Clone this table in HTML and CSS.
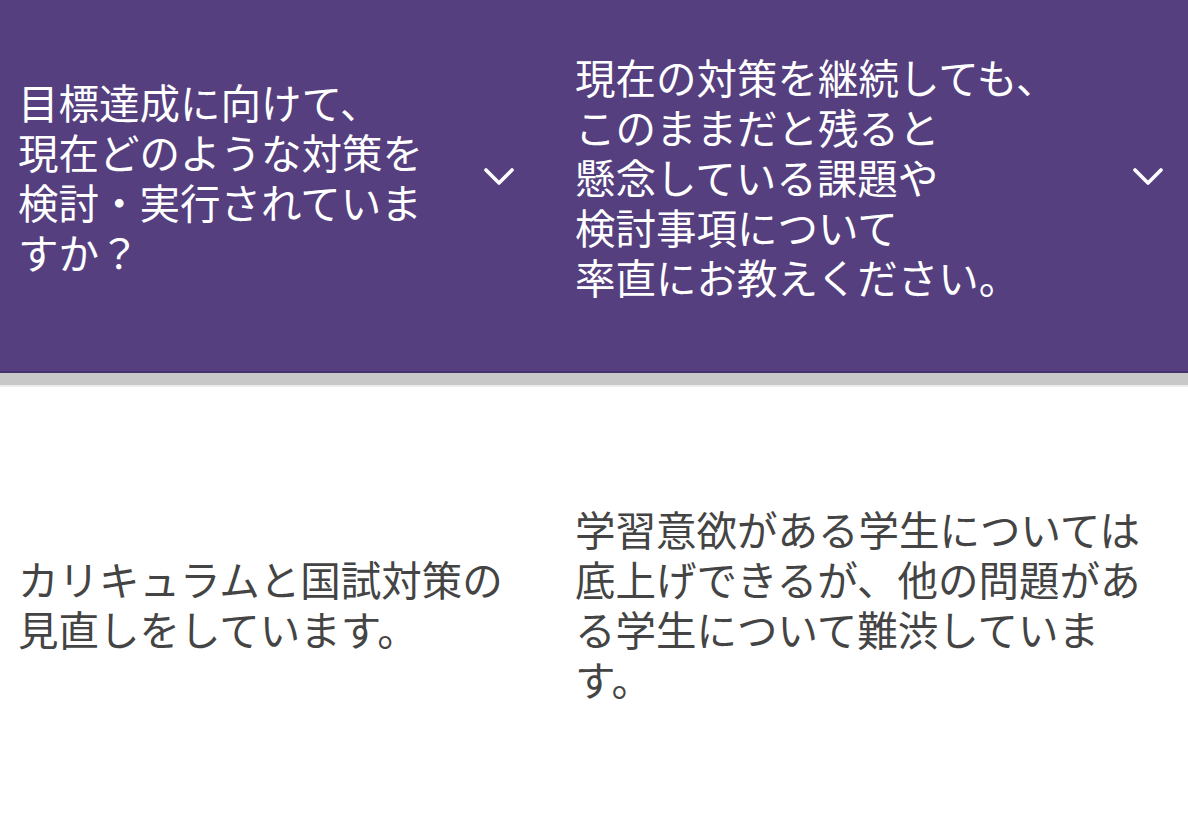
FILE: index.html
```html
<!DOCTYPE html>
<html lang="ja">
<head>
<meta charset="utf-8">
<link rel="stylesheet" href="styles.css">
</head>
<body>
<div class="table">
  <div class="head">
    <div class="cell head-cell first">
      <div class="q">目標達成に向けて、<br>現在どのような対策を検討・実行されていますか？</div>
      <div class="chev"><svg width="30" height="20" viewBox="0 0 30 20"><path d="M2 3 L15 16 L28 3" fill="none" stroke="#fff" stroke-width="3.6" stroke-linecap="round" stroke-linejoin="round"/></svg></div>
    </div>
    <div class="cell head-cell second">
      <div class="q">現在の対策を継続しても、<br>このままだと残ると<br>懸念している課題や<br>検討事項について<br>率直にお教えください。</div>
      <div class="chev"><svg width="30" height="20" viewBox="0 0 30 20"><path d="M2 3 L15 16 L28 3" fill="none" stroke="#fff" stroke-width="3.6" stroke-linecap="round" stroke-linejoin="round"/></svg></div>
    </div>
  </div>
  <div class="divider"></div>
  <div class="body">
    <div class="cell body-cell first">カリキュラムと国試対策の見直しをしています。</div>
    <div class="cell body-cell second">学習意欲がある学生については底上げできるが、他の問題がある学生について難渋しています。</div>
  </div>
</div>
</body>
</html>
```
FILE: styles.css
```css
html, body {
  margin: 0;
  padding: 0;
  background: #ffffff;
}
body {
  font-family: "Noto Sans CJK JP", "Noto Sans", sans-serif;
  font-size: 40.5px;
  line-height: 50px;
  width: 1188px;
  height: 840px;
  overflow: hidden;
}
.head, .body {
  display: grid;
  grid-template-columns: 557px 1fr;
}
.head {
  background: #553f7f;
  height: 371px;
  border-bottom: 2px solid #47336b;
  color: #ffffff;
}
.cell.first {
  padding: 0 20px 0 18px;
}
.cell.second {
  padding: 0 0 0 18px;
}
.head-cell {
  display: flex;
  align-items: center;
  padding-bottom: 17px !important;
}
.q {
  flex: 1;
  min-width: 0;
}
.chev {
  width: 80px;
  flex: none;
  display: flex;
  justify-content: center;
  align-items: center;
}
.head-cell.first .chev {
  margin-right: -2px;
}
.divider {
  height: 12px;
  background: #c8c8c8;
  border-bottom: 2px solid #ececec;
}
.body {
  color: #444444;
  height: 450px;
}
.body-cell {
  display: flex;
  align-items: center;
  padding-bottom: 16px !important;
}
.body-cell.second {
  padding-right: 20px !important;
}
```
